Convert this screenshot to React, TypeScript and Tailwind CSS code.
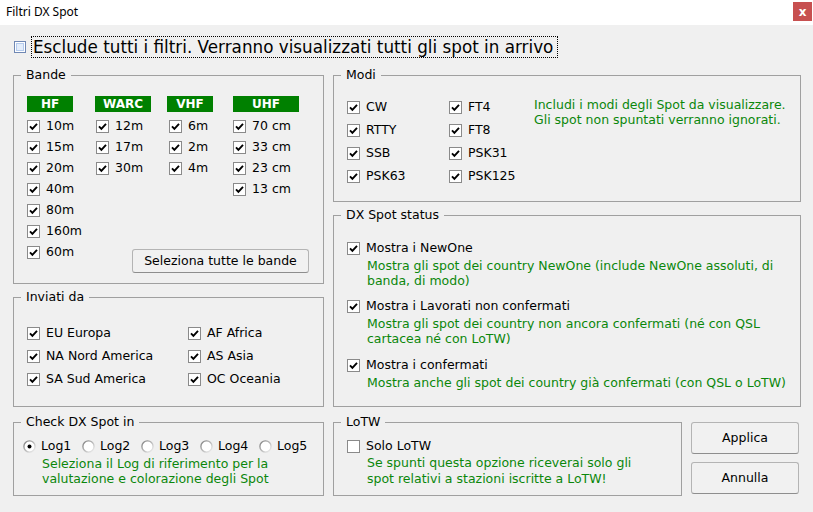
import type { ReactNode } from "react";

const hf = ["10m", "15m", "20m", "40m", "80m", "160m", "60m"];
const warc = ["12m", "17m", "30m"];
const vhf = ["6m", "2m", "4m"];
const uhf = ["70 cm", "33 cm", "23 cm", "13 cm"];

const modesLeft = ["CW", "RTTY", "SSB", "PSK63"];
const modesRight = ["FT4", "FT8", "PSK31", "PSK125"];

const continentsLeft = ["EU Europa", "NA Nord America", "SA Sud America"];
const continentsRight = ["AF Africa", "AS Asia", "OC Oceania"];

const logs = ["Log1", "Log2", "Log3", "Log4", "Log5"];

const statusItems = [
  {
    label: "Mostra i NewOne",
    hint: "Mostra gli spot dei country NewOne (include NewOne assoluti, di banda, di modo)",
    height: "h-[58px]",
  },
  {
    label: "Mostra i Lavorati non confermati",
    hint: "Mostra gli spot dei country non ancora confermati (né con QSL cartacea né con LoTW)",
    height: "h-[59px]",
  },
  {
    label: "Mostra i confermati",
    hint: "Mostra anche gli spot dei country già confermati (con QSL o LoTW)",
    height: "h-[58px]",
  },
];

function Check({ checked = true }: { checked?: boolean }) {
  return (
    <span className="flex h-[13px] w-[13px] shrink-0 items-center justify-center border border-[#8a8a8a] bg-white">
      {checked && (
        <svg width="9" height="9" viewBox="0 0 9 9">
          <path d="M1 4.3 L3.4 6.8 L8 1.8" stroke="#000" strokeWidth="1.9" fill="none" />
        </svg>
      )}
    </span>
  );
}

function Radio({ checked = false }: { checked?: boolean }) {
  return (
    <svg width="13" height="13" viewBox="0 0 13 13" className="shrink-0">
      <defs>
        <linearGradient id="ring" x1="0" y1="0" x2="1" y2="1">
          <stop offset="0" stopColor="#7c7c7c" />
          <stop offset="1" stopColor="#f4f4f4" />
        </linearGradient>
      </defs>
      <circle cx="6.5" cy="6.5" r="5.6" fill="#fff" stroke="url(#ring)" strokeWidth="1.4" />
      {checked && <circle cx="6.5" cy="6.5" r="2" fill="#000" />}
    </svg>
  );
}

function Item({ label, h = "h-[21px]" }: { label: string; h?: string }) {
  return (
    <div className={`flex items-center ${h}`}>
      <Check />
      <span className="ml-[6px] whitespace-nowrap">{label}</span>
    </div>
  );
}

function Group({ title, className, children }: { title: string; className: string; children: ReactNode }) {
  return (
    <fieldset className={`border border-[#a0a0a0] ${className}`}>
      <legend className="ml-[7px] px-[5px] leading-[16px]">{title}</legend>
      {children}
    </fieldset>
  );
}

function BandHeader({ name, w }: { name: string; w: string }) {
  return (
    <div className={`h-[16px] ${w} bg-[#008000] text-center text-[12px] font-bold leading-[16px] text-white`}>
      {name}
    </div>
  );
}

function WinButton({ children, className }: { children: ReactNode; className: string }) {
  return (
    <button className={`rounded-[3px] border border-[#b4b4b4] border-b-[#8e8e8e] bg-[#f1f1f1] ${className}`}>
      {children}
    </button>
  );
}

export default function App() {
  return (
    <div className="h-[512px] w-[813px] overflow-hidden bg-[#f0f0f0] font-['DejaVu_Sans',sans-serif] text-[12.5px] text-black">
      {/* title bar */}
      <div className="flex h-[25px] items-start justify-between bg-white">
        <span className="pl-[6px] pt-[4px] font-['Noto_Sans',sans-serif] text-[12px] leading-[16px]">
          Filtri DX Spot
        </span>
        <div className="mr-[1px] mt-[2px] flex h-[19px] w-[19px] items-center justify-center bg-[#c75050] text-[12px] font-bold leading-none text-white">
          x
        </div>
      </div>

      {/* disable-all toggle */}
      <div className="mt-[11px] flex h-[22px] items-center pl-[14px]">
        <span className="h-[12px] w-[12px] border border-[#7088b4] bg-white p-[1px]">
          <span className="block h-full w-full border border-[#b4cbee] bg-[#e3edfb]" />
        </span>
        <span className="ml-[5px] h-[22px] w-[527px] whitespace-nowrap border border-dotted border-black pl-[1px] text-[16.8px] leading-[20px]">
          Esclude tutti i filtri. Verranno visualizzati tutti gli spot in arrivo
        </span>
      </div>

      <div className="mt-[9px] flex gap-[9px] pl-[13px]">
        {/* left column */}
        <div className="flex w-[311px] flex-col">
          <Group title="Bande" className="h-[217px]">
            <div className="flex pl-[13px] pt-[13px]">
              <div className="w-[68px] pb-[10px]">
                <BandHeader name="HF" w="w-[46px]" />
                <div className="mt-[4px]">
                  {hf.map((b) => (
                    <Item key={b} label={b} />
                  ))}
                </div>
              </div>
              <div className="flex flex-col">
                <div className="flex">
                  <div className="w-[72px]">
                    <BandHeader name="WARC" w="w-[56px]" />
                    <div className="mt-[4px] pl-[1px]">
                      {warc.map((b) => (
                        <Item key={b} label={b} />
                      ))}
                    </div>
                  </div>
                  <div className="w-[66px]">
                    <BandHeader name="VHF" w="w-[46px]" />
                    <div className="mt-[4px] pl-[2px]">
                      {vhf.map((b) => (
                        <Item key={b} label={b} />
                      ))}
                    </div>
                  </div>
                  <div>
                    <BandHeader name="UHF" w="w-[66px]" />
                    <div className="mt-[4px]">
                      {uhf.map((b) => (
                        <Item key={b} label={b} />
                      ))}
                    </div>
                  </div>
                </div>
                <WinButton className="ml-[37px] mt-auto h-[24px] w-[177px]">Seleziona tutte le bande</WinButton>
              </div>
            </div>
          </Group>

          <Group title="Inviati da" className="mt-[5px] h-[118px]">
            <div className="flex pl-[13px] pt-[17px]">
              <div className="w-[161px]">
                {continentsLeft.map((c) => (
                  <Item key={c} label={c} h="h-[23px]" />
                ))}
              </div>
              <div>
                {continentsRight.map((c) => (
                  <Item key={c} label={c} h="h-[23px]" />
                ))}
              </div>
            </div>
          </Group>

          <Group title="Check DX Spot in" className="mt-[7px] h-[82px]">
            <div className="pl-[9px] pt-[8px]">
              <div className="flex h-[16px] items-center">
                {logs.map((l, i) => (
                  <div key={l} className="flex w-[59px] items-center">
                    <Radio checked={i === 0} />
                    <span className="ml-[5px]">{l}</span>
                  </div>
                ))}
              </div>
              <p className="mt-[2px] pl-[19px] leading-[15px] text-[#0b870b]">
                Seleziona il Log di riferimento per la
                <br />
                valutazione e colorazione degli Spot
              </p>
            </div>
          </Group>
        </div>

        {/* right column */}
        <div className="flex w-[468px] flex-col">
          <Group title="Modi" className="h-[135px]">
            <div className="flex pl-[13px] pt-[13px]">
              <div className="w-[102px]">
                {modesLeft.map((m) => (
                  <Item key={m} label={m} h="h-[23px]" />
                ))}
              </div>
              <div className="w-[85px]">
                {modesRight.map((m) => (
                  <Item key={m} label={m} h="h-[23px]" />
                ))}
              </div>
              <p className="mt-[1px] whitespace-nowrap leading-[15px] text-[#0b870b]">
                Includi i modi degli Spot da visualizzare.
                <br />
                Gli spot non spuntati verranno ignorati.
              </p>
            </div>
          </Group>

          <Group title="DX Spot status" className="mt-[5px] h-[200px]">
            <div className="pl-[13px] pr-[6px] pt-[17px]">
              {statusItems.map((s) => (
                <div key={s.label} className={s.height}>
                  <Item label={s.label} h="h-[16px]" />
                  <p className="mt-[2px] pl-[20px] leading-[15px] text-[#0b870b]">{s.hint}</p>
                </div>
              ))}
            </div>
          </Group>

          <div className="mt-[7px] flex">
            <Group title="LoTW" className="h-[82px] w-[349px]">
              <div className="pl-[13px] pt-[8px]">
                <div className="flex h-[16px] items-center">
                  <Check checked={false} />
                  <span className="ml-[6px]">Solo LoTW</span>
                </div>
                <p className="mt-[1px] whitespace-nowrap pl-[20px] leading-[16px] text-[#0b870b]">
                  Se spunti questa opzione riceverai solo gli
                  <br />
                  spot relativi a stazioni iscritte a LoTW!
                </p>
              </div>
            </Group>
            <div className="ml-[9px] flex flex-col gap-[8px] pt-[8px]">
              <WinButton className="h-[32px] w-[108px]">Applica</WinButton>
              <WinButton className="h-[32px] w-[108px]">Annulla</WinButton>
            </div>
          </div>
        </div>
      </div>
    </div>
  );
}
